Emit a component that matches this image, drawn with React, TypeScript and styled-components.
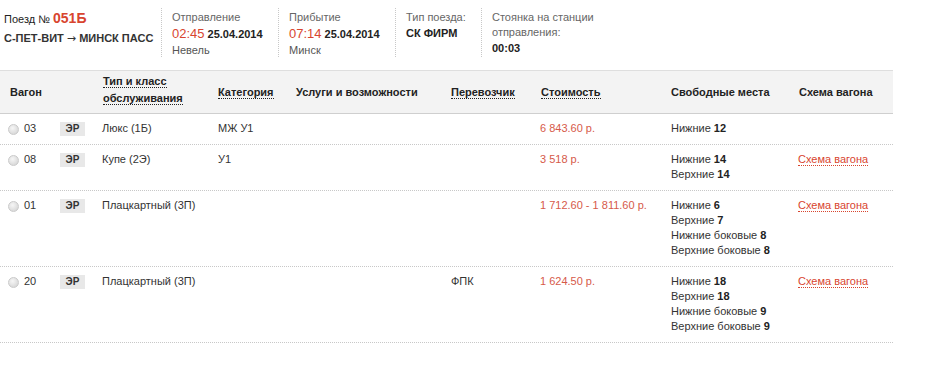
import styled, { createGlobalStyle } from "styled-components";

const GlobalStyle = createGlobalStyle`
  body {
    margin: 0;
    background: #fff;
    font-family: "Liberation Sans", Arial, sans-serif;
    font-size: 11px;
    color: #333;
  }
`;

const COLUMNS = "52px 42px 116px 78px 155px 89px 131px 127px 95px";

const Page = styled.div`
  width: 940px;
`;

const TrainInfo = styled.div`
  display: flex;
  height: 70px;
  padding-top: 8px;
  box-sizing: border-box;
`;

const InfoBlock = styled.div<{ $width: number; $first?: boolean }>`
  width: ${(p) => p.$width}px;
  height: 49px;
  box-sizing: border-box;
  padding: ${(p) => (p.$first ? "1px 0 0 4px" : "2px 0 0 10px")};
  border-left: ${(p) => (p.$first ? "none" : "1px dotted #c8c8c8")};
`;

const TrainNumber = styled.div`
  line-height: 18px;
  color: #222;
`;

const NumberValue = styled.span`
  color: #d8452f;
  font-size: 14px;
  font-weight: bold;
`;

const Route = styled.div`
  margin-top: 2px;
  line-height: 16px;
  font-weight: bold;
  color: #333;
`;

const Arrow = styled.span`
  font-family: "DejaVu Sans", sans-serif;
  font-weight: normal;
  font-size: 11px;
`;

const Label = styled.div`
  color: #666;
  line-height: 15px;
`;

const TimeLine = styled.div`
  line-height: 17px;
`;

const Time = styled.span`
  color: #d8452f;
  font-size: 13px;
  margin-right: 3px;
`;

const Strong = styled.span`
  font-weight: bold;
  color: #222;
`;

const Station = styled.div`
  color: #555;
  line-height: 14px;
`;

const Value = styled.div`
  line-height: 16px;
  font-weight: bold;
  color: #222;
`;

const Table = styled.div`
  width: 893px;
`;

const HeaderRow = styled.div`
  display: grid;
  grid-template-columns: ${COLUMNS};
  align-items: center;
  height: 44px;
  box-sizing: border-box;
  padding-left: 8px;
  background: #f3f3f3;
  border-top: 1px solid #dedede;
  border-bottom: 1px solid #cfcfcf;
  font-weight: bold;
  color: #222;
`;

const HeaderCell = styled.div<{ $span?: number; $shift?: number; $raise?: number }>`
  grid-column: span ${(p) => p.$span ?? 1};
  margin-left: ${(p) => p.$shift ?? 0}px;
  margin-top: ${(p) => -(p.$raise ?? 0)}px;
  line-height: 17px;
`;

const Hint = styled.span`
  border-bottom: 1px dotted #222;
`;

const Row = styled.div`
  display: grid;
  grid-template-columns: ${COLUMNS};
  align-items: start;
  padding: 7px 0 8px 8px;
  border-bottom: 1px dotted #c8c8c8;
  line-height: 15px;
`;

const Cell = styled.div<{ $shift?: number }>`
  margin-left: ${(p) => p.$shift ?? 0}px;
`;

const CarCell = styled.div`
  display: flex;
  align-items: center;
  gap: 5px;
`;

const Radio = styled.span`
  width: 11px;
  height: 11px;
  border-radius: 50%;
  background: radial-gradient(circle at 40% 35%, #f6f6f6, #d0d0d0);
  border: 1px solid #cacaca;
  box-sizing: border-box;
  margin-top: 1px;
`;

const Badge = styled.span`
  display: inline-block;
  width: 25px;
  height: 14px;
  line-height: 14px;
  margin-top: 1px;
  background: #e8e8e8;
  font-size: 10px;
  font-weight: bold;
  text-align: center;
  color: #333;
`;

const Price = styled.div`
  color: #d65a4a;
`;

const SchemeLink = styled.a`
  color: #d8452f;
  text-decoration: none;
  border-bottom: 1px dotted #d8452f;
`;

type Car = {
  num: string;
  type: string;
  category: string;
  carrier: string;
  price: string;
  seats: [string, string][];
  scheme: boolean;
};

const cars: Car[] = [
  { num: "03", type: "Люкс (1Б)", category: "МЖ У1", carrier: "", price: "6 843.60 р.", seats: [["Нижние", "12"]], scheme: false },
  { num: "08", type: "Купе (2Э)", category: "У1", carrier: "", price: "3 518 р.", seats: [["Нижние", "14"], ["Верхние", "14"]], scheme: true },
  {
    num: "01",
    type: "Плацкартный (3П)",
    category: "",
    carrier: "",
    price: "1 712.60 - 1 811.60 р.",
    seats: [["Нижние", "6"], ["Верхние", "7"], ["Нижние боковые", "8"], ["Верхние боковые", "8"]],
    scheme: true,
  },
  {
    num: "20",
    type: "Плацкартный (3П)",
    category: "",
    carrier: "ФПК",
    price: "1 624.50 р.",
    seats: [["Нижние", "18"], ["Верхние", "18"], ["Нижние боковые", "9"], ["Верхние боковые", "9"]],
    scheme: true,
  },
];

export default function App() {
  return (
    <Page>
      <GlobalStyle />
      <TrainInfo>
        <InfoBlock $width={161} $first>
          <TrainNumber>
            Поезд № <NumberValue>051Б</NumberValue>
          </TrainNumber>
          <Route>
            С-ПЕТ-ВИТ <Arrow>→</Arrow> МИНСК ПАСС
          </Route>
        </InfoBlock>
        <InfoBlock $width={117}>
          <Label>Отправление</Label>
          <TimeLine>
            <Time>02:45</Time>
            <Strong>25.04.2014</Strong>
          </TimeLine>
          <Station>Невель</Station>
        </InfoBlock>
        <InfoBlock $width={117}>
          <Label>Прибытие</Label>
          <TimeLine>
            <Time>07:14</Time>
            <Strong>25.04.2014</Strong>
          </TimeLine>
          <Station>Минск</Station>
        </InfoBlock>
        <InfoBlock $width={86}>
          <Label>Тип поезда:</Label>
          <Value>СК ФИРМ</Value>
        </InfoBlock>
        <InfoBlock $width={130}>
          <Label>
            Стоянка на станции
            <br />
            отправления:
          </Label>
          <Value>00:03</Value>
        </InfoBlock>
      </TrainInfo>

      <Table>
        <HeaderRow>
          <HeaderCell $span={2} $shift={2}>Вагон</HeaderCell>
          <HeaderCell $shift={1} $raise={4}>
            <Hint>Тип и класс</Hint>
            <br />
            <Hint>обслуживания</Hint>
          </HeaderCell>
          <HeaderCell>
            <Hint>Категория</Hint>
          </HeaderCell>
          <HeaderCell>Услуги и возможности</HeaderCell>
          <HeaderCell>
            <Hint>Перевозчик</Hint>
          </HeaderCell>
          <HeaderCell $shift={1}>
            <Hint>Стоимость</Hint>
          </HeaderCell>
          <HeaderCell>Свободные места</HeaderCell>
          <HeaderCell $shift={1}>Схема вагона</HeaderCell>
        </HeaderRow>

        {cars.map((car) => (
          <Row key={car.num}>
            <CarCell>
              <Radio />
              <span>{car.num}</span>
            </CarCell>
            <div>
              <Badge>ЭР</Badge>
            </div>
            <Cell>{car.type}</Cell>
            <Cell>{car.category}</Cell>
            <Cell />
            <Cell>{car.carrier}</Cell>
            <Price>{car.price}</Price>
            <Cell>
              {car.seats.map(([kind, count]) => (
                <div key={kind}>
                  {kind} <Strong>{count}</Strong>
                </div>
              ))}
            </Cell>
            <Cell>{car.scheme && <SchemeLink href="#">Схема вагона</SchemeLink>}</Cell>
          </Row>
        ))}
      </Table>
    </Page>
  );
}
